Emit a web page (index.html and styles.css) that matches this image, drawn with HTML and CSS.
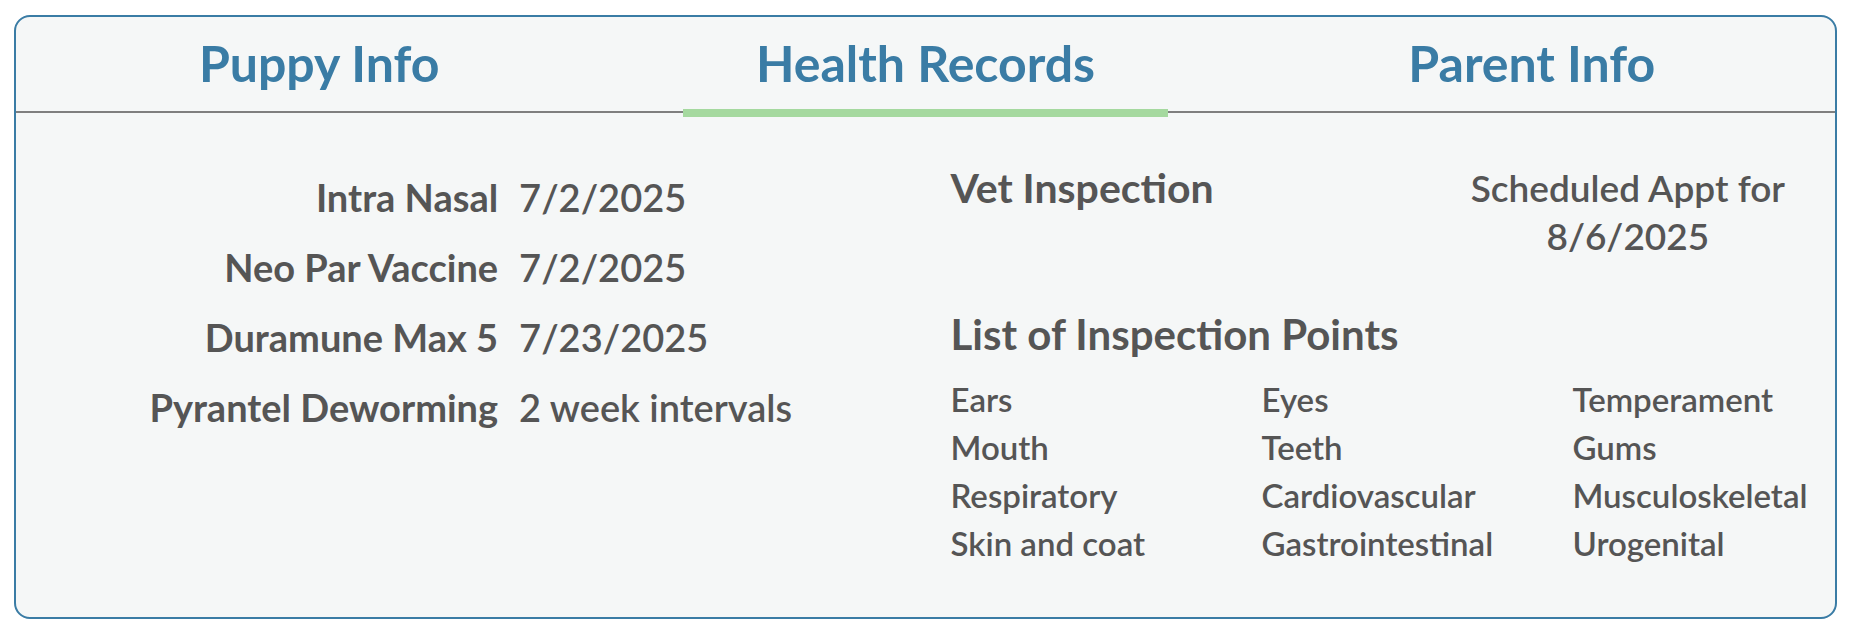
FILE: index.html
```html
<!DOCTYPE html>
<html lang="en">
<head>
  <meta charset="UTF-8">
  <meta name="viewport" content="width=device-width, initial-scale=1.0">
  <title>Health Records</title>
  <link rel="stylesheet" href="styles.css">
</head>
<body>
  <div class="card">
    <nav class="tabs">
      <div class="tab">Puppy Info</div>
      <div class="tab active">Health Records</div>
      <div class="tab">Parent Info</div>
    </nav>

    <div class="panel">
      <div class="half left">
        <table class="shots">
          <tr><th>Intra Nasal</th><td>7/2/2025</td></tr>
          <tr><th>Neo Par Vaccine</th><td>7/2/2025</td></tr>
          <tr><th>Duramune Max 5</th><td>7/23/2025</td></tr>
          <tr><th>Pyrantel Deworming</th><td>2 week intervals</td></tr>
        </table>
      </div>

      <div class="half right">
        <div class="vet-row">
          <h3>Vet Inspection</h3>
          <p class="appt">Scheduled Appt for<br>8/6/2025</p>
        </div>
        <h3 class="points-title">List of Inspection Points</h3>
        <ul class="points">
          <li>Ears</li>
          <li>Eyes</li>
          <li>Temperament</li>
          <li>Mouth</li>
          <li>Teeth</li>
          <li>Gums</li>
          <li>Respiratory</li>
          <li>Cardiovascular</li>
          <li>Musculoskeletal</li>
          <li>Skin and coat</li>
          <li>Gastrointestinal</li>
          <li>Urogenital</li>
        </ul>
      </div>
    </div>
  </div>
</body>
</html>
```

FILE: styles.css
```css
body {
  font-family: 'Lato', sans-serif;
  background: white;
  margin: 0;
  padding: 15px 15px 0 14px;
  color: #555;
}
.card {
  background: #f5f7f7;
  border: 2px solid #3a7ca5;
  border-radius: 16px;
  height: 604px;
  box-sizing: border-box;
  overflow: hidden;
}
.tabs {
  display: grid;
  grid-template-columns: 1fr 1fr 1fr;
  border-bottom: 2px solid #7f7f7f;
  height: 96px;
  box-sizing: border-box;
}
.tab {
  text-align: center;
  font-size: 50px;
  line-height: 60px;
  font-weight: 700;
  color: #3a7ca5;
  padding-top: 16px;
  position: relative;
}
.tab.active::after {
  content: '';
  position: absolute;
  left: 10%;
  right: 10%;
  bottom: -6px;
  height: 8px;
  background: #a5d99f;
}
.panel {
  display: grid;
  grid-template-columns: minmax(0, 1fr) minmax(0, 1fr);
}
.left {
  display: flex;
  justify-content: center;
  align-items: flex-start;
  padding-top: 49px;
}
.shots {
  border-collapse: collapse;
  font-size: 38px;
}
.shots th {
  text-align: right;
  font-weight: 700;
  padding: 0 21px 0 0;
  height: 70px;
}
.shots td {
  font-weight: 600;
  padding: 0;
}
.right {
  padding: 51px 50px 0 25px;
}
h3 {
  margin: 0;
  font-size: 41px;
  line-height: 48px;
  font-weight: 700;
}
.vet-row {
  display: flex;
  justify-content: space-between;
  align-items: flex-start;
  height: 146px;
}
.appt {
  margin: 0;
  text-align: center;
  font-size: 37px;
  font-weight: 600;
  line-height: 48px;
}
.points-title {
  font-size: 42px;
  margin-bottom: 17px;
}
.points {
  list-style: none;
  margin: 0;
  padding: 0;
  display: grid;
  grid-template-columns: 311px 311px auto;
  font-size: 33px;
  font-weight: 600;
  line-height: 48px;
}
```
